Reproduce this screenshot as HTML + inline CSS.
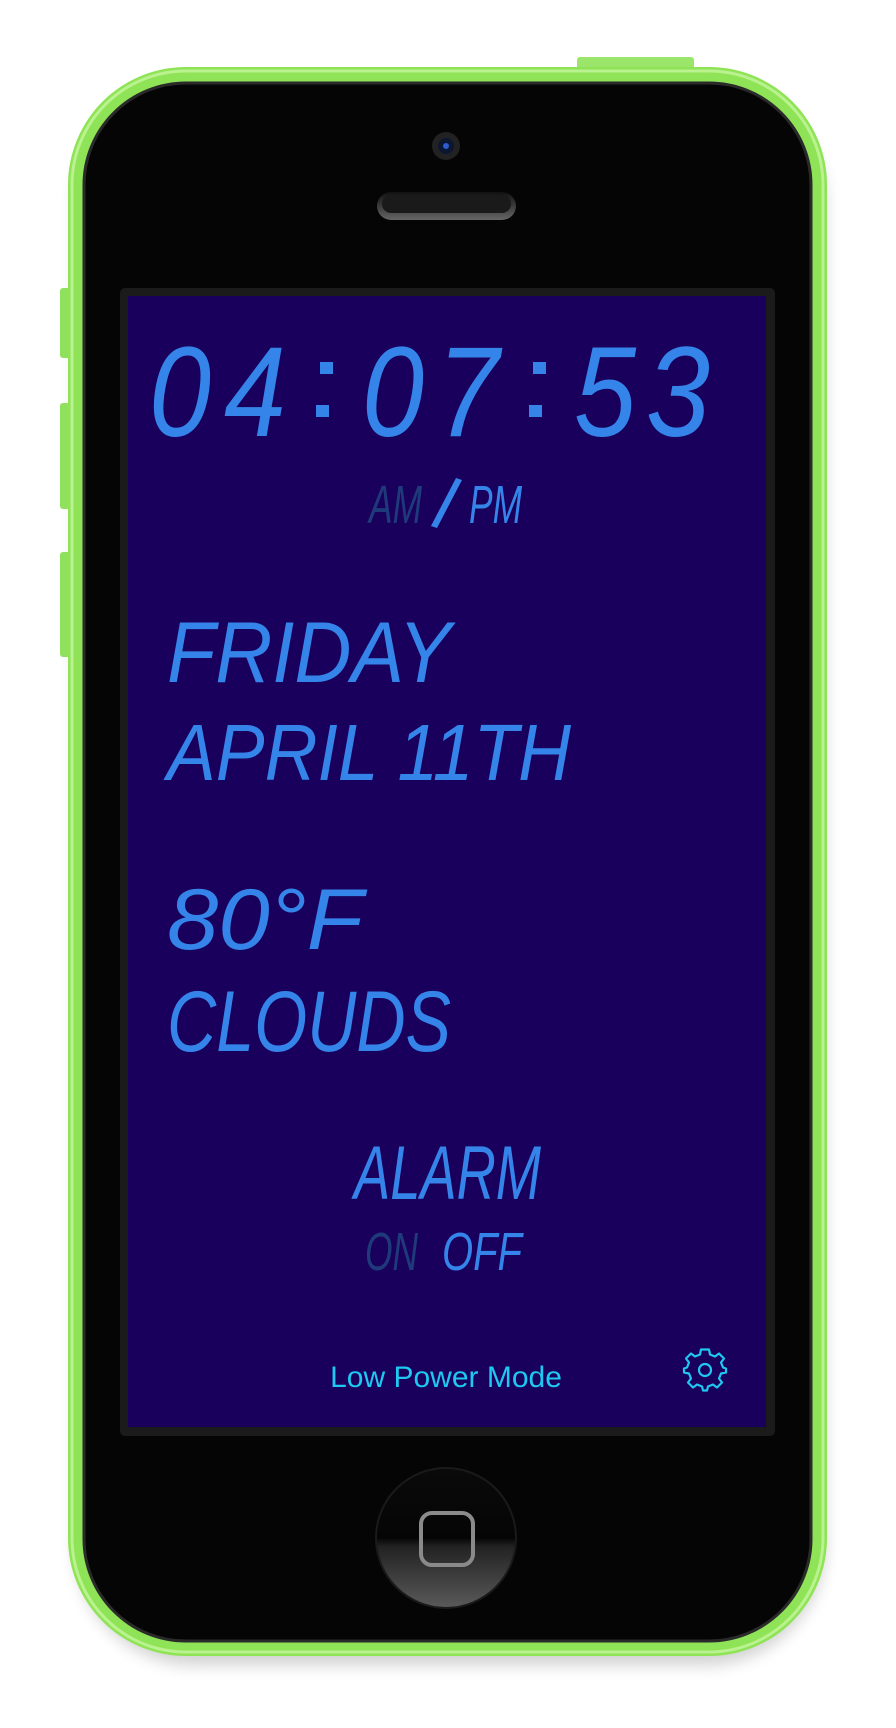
<!DOCTYPE html>
<html><head><meta charset="utf-8"><style>html,body{margin:0;padding:0;background:#fff;width:896px;height:1728px;overflow:hidden}</style></head>
<body>
<svg width="896" height="1728" viewBox="0 0 896 1728" xmlns="http://www.w3.org/2000/svg" font-family="Liberation Sans, sans-serif">
<defs>
<linearGradient id="home" x1="0" y1="0" x2="0" y2="1">
<stop offset="0" stop-color="#0a0a0a"/><stop offset="0.5" stop-color="#050505"/><stop offset="0.56" stop-color="#222"/><stop offset="1" stop-color="#5a5a5a"/></linearGradient>
<linearGradient id="spk" x1="0" y1="0" x2="0" y2="1"><stop offset="0" stop-color="#111"/><stop offset="1" stop-color="#666"/></linearGradient>
<filter id="sh" x="-10%" y="-10%" width="120%" height="120%"><feGaussianBlur stdDeviation="8"/></filter>
</defs>
<rect x="75" y="85" width="750" height="1580" rx="120" fill="#000" opacity="0.18" filter="url(#sh)"/>
<rect x="577" y="57" width="117" height="14" rx="3" fill="#9be66a"/>
<rect x="60" y="288" width="12" height="70" rx="3" fill="#8fe05c"/>
<rect x="60" y="403" width="12" height="106" rx="3" fill="#8fe05c"/>
<rect x="60" y="552" width="12" height="105" rx="3" fill="#8fe05c"/>
<rect x="68" y="67" width="759" height="1589" rx="118" fill="#8fe356"/>
<rect x="72" y="71" width="751" height="1581" rx="114" fill="none" stroke="#b9f28e" stroke-width="3"/>
<rect x="84" y="83" width="727" height="1558" rx="102" fill="#050505" stroke="#2a2a2a" stroke-width="3"/>
<circle cx="446" cy="146" r="14" fill="#222"/>
<circle cx="446" cy="146" r="8" fill="#0b1730"/>
<circle cx="446" cy="146" r="3" fill="#2a5bd0"/>
<rect x="377" y="192" width="139" height="28" rx="14" fill="url(#spk)"/>
<rect x="382" y="195" width="129" height="18" rx="9" fill="#1a1a1a"/>
<rect x="120" y="288" width="655" height="1148" rx="5" fill="#1b1b1b"/>
<rect x="128" y="296" width="638" height="1131" fill="#19005c"/>
<g fill="#3584e9" font-size="128" font-style="italic">
<text x="149" y="436" textLength="62" lengthAdjust="spacingAndGlyphs">0</text>
<text x="224" y="436" textLength="62" lengthAdjust="spacingAndGlyphs">4</text>
<rect x="320" y="362" width="13" height="12"/><rect x="316" y="405" width="13" height="12"/>
<text x="362" y="436" textLength="62" lengthAdjust="spacingAndGlyphs">0</text>
<text x="437" y="436" textLength="62" lengthAdjust="spacingAndGlyphs">7</text>
<rect x="533" y="362" width="13" height="12"/><rect x="529" y="405" width="13" height="12"/>
<text x="574" y="436" textLength="62" lengthAdjust="spacingAndGlyphs">5</text>
<text x="646" y="436" textLength="64" lengthAdjust="spacingAndGlyphs">3</text>
</g>
<text x="369" y="523" font-size="54" font-style="italic" fill="#1f3a7a" textLength="53" lengthAdjust="spacingAndGlyphs">AM</text>
<polygon points="456,478 462,480 437,528 431,526" fill="#3584e9"/>
<text x="469" y="523" font-size="54" font-style="italic" fill="#3584e9" textLength="53" lengthAdjust="spacingAndGlyphs">PM</text>
<g fill="#3584e9" font-style="italic">
<text x="167" y="682" font-size="86" textLength="284" lengthAdjust="spacingAndGlyphs">FRIDAY</text>
<text x="167" y="780" font-size="80" textLength="404" lengthAdjust="spacingAndGlyphs">APRIL  11TH</text>
<text x="167" y="949" font-size="86" textLength="196" lengthAdjust="spacingAndGlyphs">80°F</text>
<text x="167" y="1051" font-size="86" textLength="284" lengthAdjust="spacingAndGlyphs">CLOUDS</text>
<text x="354" y="1199" font-size="76" textLength="187" lengthAdjust="spacingAndGlyphs">ALARM</text>
<text x="442" y="1270" font-size="54" textLength="80" lengthAdjust="spacingAndGlyphs">OFF</text>
</g>
<text x="365" y="1270" font-size="54" font-style="italic" fill="#1f3a7a" textLength="53" lengthAdjust="spacingAndGlyphs">ON</text>
<text x="446" y="1387" font-size="30" fill="#1ec8f0" text-anchor="middle">Low Power Mode</text>
<g transform="translate(705,1370)" fill="none" stroke="#1ec8f0" stroke-width="2.2" stroke-linejoin="round">
<path d="M-4,-19 L4,-19 L5,-14 L10,-12 L14,-15 L19,-10 L16,-6 L18,-1 L21,0 L21,4 L16,5 L14,10 L17,14 L12,19 L8,16 L3,18 L2,22 L-2,22 L-3,18 L-8,16 L-12,19 L-17,14 L-14,10 L-16,5 L-21,4 L-21,0 L-18,-1 L-16,-6 L-19,-10 L-14,-15 L-10,-12 L-5,-14 Z" transform="translate(0,-1.5)"/>
<circle cx="0" cy="0" r="6"/>
</g>
<circle cx="446" cy="1538" r="70" fill="url(#home)" stroke="#1a1a1a" stroke-width="2"/>
<rect x="421" y="1513" width="52" height="52" rx="11" fill="none" stroke="#8a8a8a" stroke-width="4"/>
</svg>
</body></html>
